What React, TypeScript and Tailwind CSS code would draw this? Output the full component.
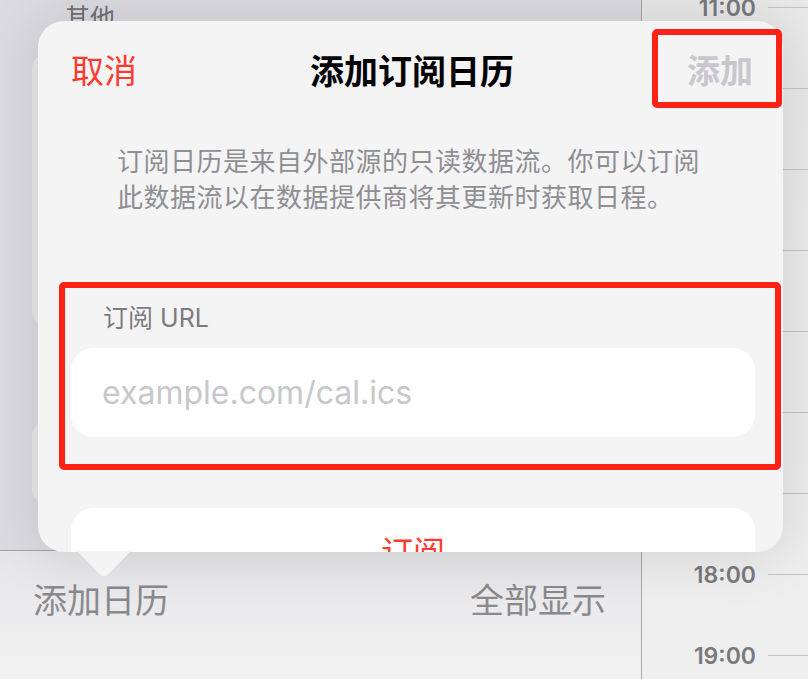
import React from "react";

const FONT = { fontFamily: 'Inter, "Noto Sans CJK SC", sans-serif' };

const hours = ["11:00", "12:00", "13:00", "14:00", "15:00", "16:00", "17:00", "18:00", "19:00"];

export default function App() {
  return (
    <div style={FONT} className="relative w-[808px] h-[679px] overflow-hidden flex bg-[#ebebeb]">
      {/* Left pane */}
      <div className="w-[641px] h-full flex flex-col">
        <div className="h-[550px] bg-[#dcdce0] pt-[6px]">
          <div className="pl-[65px] text-[25px] leading-none text-[#707075]">其他</div>
          <div className="mt-[22px] mx-[32px] h-[274px] rounded-[16px] bg-[#e9e9ec]" />
          <div className="mt-[93px] mx-[32px] h-[85px] rounded-[16px] bg-[#e9e9ec]" />
        </div>
        <div className="h-px bg-[#a3a3a7]" />
        <div className="flex-1 bg-gradient-to-b from-[#e6e6e8] to-[#f1f1f2] flex justify-between pl-[33px] pr-[35px] pt-[33px] text-[34px] leading-none text-[#8a8a8e]">
          <span>添加日历</span>
          <span>全部显示</span>
        </div>
      </div>
      <div className="w-px h-full bg-[#a7a7aa]" />
      {/* Right pane: day timeline */}
      <div className="flex-1 h-full bg-gradient-to-b from-[#e9e9e9] to-[#efefef]">
        <div className="-mt-[33px] flex flex-col">
          {hours.map((h) => (
            <div key={h} className="h-[81px] flex items-center">
              <div className="w-[114px] pt-[2px] text-right text-[23px] font-semibold leading-none text-[#7a7a7e]">{h}</div>
              <div className="ml-[12px] flex-1 h-px bg-[#c4c4c6]" />
            </div>
          ))}
        </div>
      </div>

      {/* Popover */}
      <div className="absolute left-[38px] top-[21px] w-[745px] h-[531px]">
        <svg className="absolute left-[39px] top-[530px]" width="54" height="27" viewBox="0 0 54 27">
          <path d="M0 0 L22 22.5 Q27 28 32 22.5 L54 0 Z" fill="#f4f4f5" />
        </svg>
        <div className="w-full h-full rounded-[26px] bg-[#f4f4f5] overflow-hidden shadow-[0_0_60px_rgba(0,0,0,0.13)]">
          <div className="grid grid-cols-[1fr_auto_1fr] items-center h-[101px] pl-[33px] pr-[30px]">
            <span className="justify-self-start text-[33px] leading-none text-[#ff3b30]">取消</span>
            <span className="text-[34px] leading-none font-bold text-black">添加订阅日历</span>
            <span className="justify-self-end text-[33px] leading-none font-bold text-[#c7c7cc]">添加</span>
          </div>
          <div className="mt-[22px] pl-[79px] text-[26px] leading-[36px] tracking-[0.5px] text-[#8e8e93] whitespace-nowrap">
            <div>订阅日历是来自外部源的只读数据流。你可以订阅</div>
            <div>此数据流以在数据提供商将其更新时获取日程。</div>
          </div>
          <div className="pl-[33px] pr-[28px]">
            <div className="mt-[87px] h-[30px] flex items-center pl-[32px] text-[25px] leading-none text-[#7c7c80]">订阅 URL</div>
            <div className="mt-[15px] h-[89px] rounded-[22px] bg-white flex items-center pl-[31px] text-[32px] leading-none text-[#c7c7cc]">
              example.com/cal.ics
            </div>
            <div className="mt-[71px] h-[89px] rounded-[22px] bg-white flex items-center justify-center text-[32px] leading-none text-[#ff3b30]">
              订阅
            </div>
          </div>
        </div>
        {/* annotation boxes */}
        <div className="absolute left-[614px] top-[8px] w-[130px] h-[79px] border-[6px] border-[#fe2116] rounded-[5px]" />
        <div className="absolute left-[21px] top-[261px] w-[722px] h-[188px] border-[6px] border-[#fe2116] rounded-[5px]" />
      </div>
    </div>
  );
}
